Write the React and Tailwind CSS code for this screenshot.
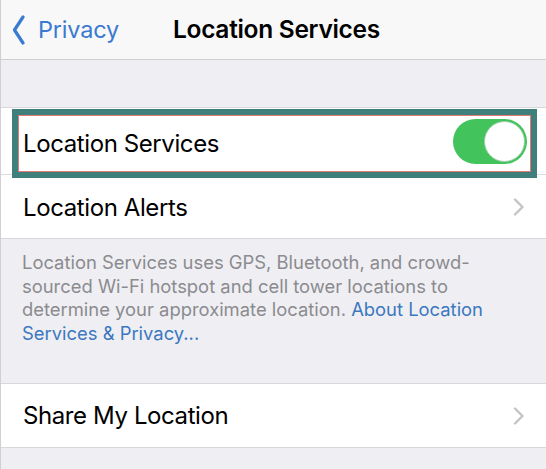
import React from "react";

function Chevron() {
  return (
    <svg width="12" height="18" viewBox="0 0 12 18" fill="none">
      <path d="M2 1.5 L9.5 9 L2 16.5" stroke="#c4c4c8" strokeWidth="2.4" strokeLinecap="round" strokeLinejoin="round" />
    </svg>
  );
}

function Toggle() {
  return (
    <div className="w-[74px] h-[45px] rounded-full bg-[#42c35c] flex items-center justify-end p-[2px]">
      <div className="w-[41px] h-[41px] rounded-full bg-white border border-[#9ccfa6]" />
    </div>
  );
}

export default function App() {
  return (
    <div
      className="w-[546px] h-[469px] bg-[#efeff3] border-l border-[#d0d0d4] overflow-hidden text-black"
      style={{ fontFamily: "Inter, 'Noto Sans', sans-serif" }}
    >
      <div className="h-[60px] bg-[#f8f8f8] border-b border-[#cfcfd2] flex items-center">
        <div className="flex items-center pl-[11px] text-[#3b7ad1]">
          <svg width="14" height="30" viewBox="0 0 14 30" fill="none">
            <path d="M11 2 L2.5 15 L11 28" stroke="#3b7ad1" strokeWidth="3.2" strokeLinecap="round" strokeLinejoin="round" />
          </svg>
          <span className="ml-[12px] text-[23.5px] tracking-[-0.2px]">Privacy</span>
        </div>
        <div className="ml-[54px] text-[24.5px] font-semibold tracking-[-0.3px]">Location Services</div>
      </div>

      <div className="h-[47px]" />

      <div className="bg-white border-t border-[#d8d8dc] border-b">
        <div className="relative h-[66px] flex items-center pl-[22px] pr-[19px] justify-between">
          <span className="pt-[5px] text-[24px] tracking-[-0.4px]">Location Services</span>
          <Toggle />
          <div className="absolute left-[11px] right-[9px] top-[1px] bottom-[-4px] border-[6px] border-[#3f807c] pointer-events-none">
            <div className="w-full h-full border border-[#e47a74]" />
          </div>
        </div>
        <div className="border-t border-[#dcdce0] h-[64px] flex items-center pl-[22px] pr-[21px] justify-between">
          <span className="pt-[3px] text-[24px] tracking-[-0.4px]">Location Alerts</span>
          <Chevron />
        </div>
      </div>

      <div className="pl-[21px] pt-[12px] h-[144px] text-[18.4px] leading-[23.5px] text-[#8b8b90]">
        Location Services uses GPS, Bluetooth, and crowd-
        <br />
        sourced Wi-Fi hotspot and cell tower locations to
        <br />
        determine your approximate location.{" "}
        <span className="text-[#3c78c0]">About Location</span>
        <br />
        <span className="text-[#3c78c0]">Services &amp; Privacy...</span>
      </div>

      <div className="bg-white border-t border-b border-[#d8d8dc] h-[65px] flex items-center pl-[22px] pr-[21px] justify-between">
        <span className="pt-[1px] text-[24px] tracking-[-0.4px]">Share My Location</span>
        <Chevron />
      </div>
    </div>
  );
}
